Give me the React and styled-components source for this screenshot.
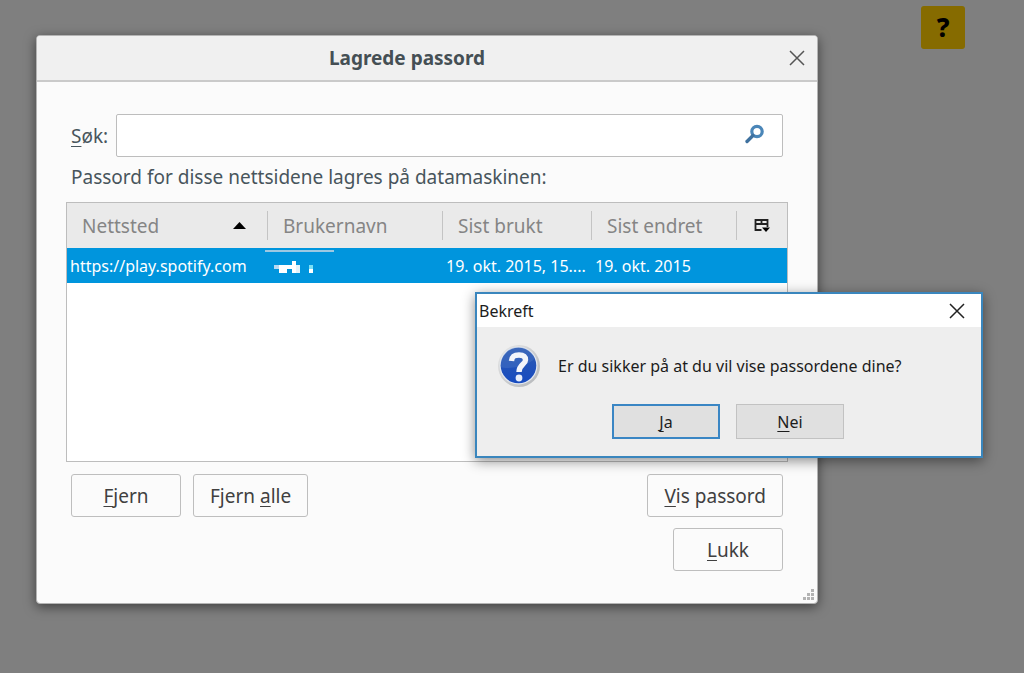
import { useState } from "react";
import styled, { createGlobalStyle } from "styled-components";

const GlobalStyle = createGlobalStyle`
  * {
    box-sizing: border-box;
  }

  body {
    margin: 0;
    background: #7f7f7f;
    font-family: "Noto Sans", "Open Sans", sans-serif;
  }

  button,
  input {
    font-family: inherit;
  }
`;

const Desktop = styled.main`
  display: flex;
  justify-content: space-between;
  align-items: flex-start;
  min-height: 100vh;
  padding: 6px 59px 36px 36px;
`;

const HelpButton = styled.button`
  width: 44px;
  height: 43px;
  padding: 0;
  border: 0;
  border-radius: 3px;
  background: #866b00;
  color: #000;
  font-size: 26px;
  line-height: 43px;
  font-weight: 800;
`;

const Window = styled.section`
  position: relative;
  flex: 0 1 782px;
  margin-top: 29px;
  border: 1px solid #b4b4b4;
  border-radius: 4px;
  background: #fbfbfb;
  color: #48555c;
  box-shadow: 0 3px 12px rgba(0, 0, 0, 0.5);
`;

const TitleBar = styled.header`
  display: grid;
  grid-template-columns: 1fr 40px;
  align-items: center;
  height: 46px;
  border-bottom: 2px solid #cacaca;
  border-radius: 3px 3px 0 0;
  background: #f0f0f0;

  h1 {
    margin: 0;
    font-size: 19px;
    line-height: 26px;
    font-weight: 700;
    text-align: center;
    color: #454f54;
  }
`;

const CloseButton = styled.button`
  display: flex;
  align-items: center;
  justify-content: center;
  width: 40px;
  height: 32px;
  padding: 0;
  border: 0;
  background: transparent;
  color: ${(props) => props.$color};
`;

const Content = styled.div`
  padding: 32px 29px;
`;

const SearchRow = styled.div`
  display: flex;
  align-items: center;
  gap: 8px;
  margin: 0 5px;

  label {
    font-size: 19px;
    line-height: 28px;
  }
`;

const SearchBox = styled.div`
  display: flex;
  flex: 1;
  align-items: center;
  height: 43px;
  padding-right: 17px;
  border: 1px solid #bdbdbd;
  border-radius: 2px;
  background: #fff;

  input {
    flex: 1;
    min-width: 0;
    height: 100%;
    padding: 0 10px;
    border: 0;
    outline: 0;
    background: transparent;
    font-size: 19px;
  }
`;

const Intro = styled.p`
  margin: 6px 5px 11px;
  font-size: 19px;
  line-height: 28px;
`;

const ListBox = styled.div`
  height: 260px;
  border: 1px solid #bdbdbd;
  background: #fff;
`;

const Table = styled.table`
  width: 100%;
  table-layout: fixed;
  border-collapse: collapse;

  th,
  td {
    padding: 0;
    text-align: left;
    white-space: nowrap;
  }

  thead tr {
    height: 45px;
    background: #eaeaea;
  }

  th {
    font-size: 19px;
    line-height: 28px;
    font-weight: 400;
    color: #858585;
  }

  tbody tr {
    height: 35px;
    background: #0095dd;
  }

  td {
    padding-left: 3px;
    font-size: 16px;
    line-height: 24px;
    color: #fff;
  }
`;

const Col = styled.col`
  width: ${(props) => props.$width};
`;

const HeadCell = styled.div`
  display: flex;
  align-items: center;
  justify-content: space-between;
  height: 29px;
  padding: 0 21px 0 15px;
  border-right: 1px solid #c4c4c4;
`;

const PickerButton = styled.button`
  display: flex;
  align-items: center;
  justify-content: center;
  width: 100%;
  height: 29px;
  padding: 0;
  border: 0;
  background: transparent;
`;

const Blurred = styled.svg`
  display: block;
  margin-left: -6px;
`;

const Actions = styled.div`
  display: flex;
  gap: 12px;
  margin: ${(props) => props.$top} 5px 0;
`;

const Button = styled.button`
  min-width: 110px;
  height: 43px;
  margin-left: ${(props) => (props.$push ? "auto" : "0")};
  padding: 0 16px;
  border: 1px solid #bebebe;
  border-radius: 3px;
  background: #fbfbfb;
  color: #404040;
  font-size: 19px;
  line-height: 28px;
`;

const Grip = styled.svg`
  position: absolute;
  right: 2px;
  bottom: 2px;
`;

const Confirm = styled.section`
  position: absolute;
  top: 256px;
  left: 438px;
  width: 508px;
  border: 2px solid #3a86bd;
  background: #eee;
  color: #1c1c1c;
  box-shadow: 0 3px 12px rgba(0, 0, 0, 0.45);
`;

const ConfirmTitle = styled.header`
  display: flex;
  align-items: center;
  justify-content: space-between;
  height: 33px;
  padding: 0 4px 0 2px;
  background: #fff;

  h2 {
    margin: 0;
    font-size: 16px;
    line-height: 24px;
    font-weight: 400;
  }
`;

const Message = styled.div`
  display: flex;
  align-items: center;
  gap: 17px;
  padding: 17px 20px 0;

  p {
    margin: 0;
    font-size: 16px;
    line-height: 24px;
  }
`;

const Choices = styled.div`
  display: flex;
  justify-content: center;
  gap: 16px;
  padding: 16px 2px 17px 0;
`;

const Choice = styled.button`
  width: 108px;
  height: 35px;
  padding: 0;
  border: ${(props) => (props.$primary ? "2px solid #3a86c4" : "1px solid #c2c2c2")};
  background: #e0e0e0;
  color: #1c1c1c;
  font-size: 16px;
  line-height: 24px;
`;

const Key = styled.span`
  text-decoration: underline;
  text-decoration-thickness: 1px;
  text-underline-offset: 3px;
  text-decoration-skip-ink: none;
`;

const logins = [
  {
    site: "https://play.spotify.com",
    lastUsed: "19. okt. 2015, 15....",
    changed: "19. okt. 2015",
  },
];

function CloseIcon() {
  return (
    <svg width="16" height="16" viewBox="0 0 16 16" fill="none" aria-hidden="true">
      <path d="M1 1l14 14M15 1L1 15" stroke="currentColor" strokeWidth="1.5" />
    </svg>
  );
}

function SearchIcon() {
  return (
    <svg width="21" height="24" viewBox="0 0 21 24" fill="none" aria-hidden="true">
      <circle cx="13" cy="7.5" r="5.2" stroke="#4a86b8" strokeWidth="3.2" />
      <path d="M9 11.5L3 17.5" stroke="#3f719f" strokeWidth="3.4" strokeLinecap="round" />
    </svg>
  );
}

function SortIcon() {
  return (
    <svg width="13" height="7" viewBox="0 0 13 7" aria-hidden="true">
      <path d="M6.5 0L13 7H0z" fill="#000" />
    </svg>
  );
}

function PickerIcon() {
  return (
    <svg width="16" height="15" viewBox="0 0 16 15" aria-hidden="true">
      <path
        d="M7.5 12H1.5V2H13.5V9M1.5 6H13.5M7.5 2V6"
        fill="none"
        stroke="#222"
        strokeWidth="1.8"
      />
      <path d="M8 9.500h8l-4 4.500z" fill="#000" />
    </svg>
  );
}

// the user name is blotted out, only a few pixels of it remain
function HiddenName() {
  return (
    <Blurred width="69" height="33" viewBox="0 0 69 33" role="img" aria-label="Skjult">
      <path d="M0 2h69" stroke="#9cc8e2" strokeWidth="2" />
      <path d="M9 16h5v4H9z" fill="#b9d9f2" />
      <path d="M14 16h8v8h-8z" fill="#fff" />
      <path d="M22 16h5v4h-5zM27 12h4v4h4v8h-8z" fill="#fff" />
      <path d="M31 16h4v8h-4z" fill="#e3f3fb" />
      <path d="M44 16h4v4h-4z" fill="#7be0f5" />
      <path d="M44 20h4v4h-4z" fill="#fff" />
    </Blurred>
  );
}

function QuestionIcon() {
  return (
    <svg width="44" height="44" viewBox="0 0 44 44" aria-hidden="true">
      <defs>
        <linearGradient id="rim" x1="0" y1="0" x2="1" y2="1">
          <stop offset="0" stopColor="#e8e8e8" />
          <stop offset="1" stopColor="#b2b5b8" />
        </linearGradient>
        <linearGradient id="ball" x1="0" y1="0" x2="0" y2="1">
          <stop offset="0" stopColor="#2d5bb2" />
          <stop offset="1" stopColor="#174bc0" />
        </linearGradient>
      </defs>
      <circle cx="22" cy="22" r="21" fill="url(#rim)" />
      <circle cx="21.500" cy="21.500" r="19" fill="#e4e9f1" />
      <circle cx="21.500" cy="21.500" r="17.800" fill="url(#ball)" />
      <path d="M3.700 23C11 26 31 22 38 14.500A17.800 17.800 0 0 0 3.700 23z" fill="#5d83ca" opacity="0.300" />
      <path
        d="M14.500 17C15 12 18 11 22 11C26 11 28.500 12.500 28.500 16C28.500 20.500 22 20.500 22 28"
        fill="none"
        stroke="#f3f5fa"
        strokeWidth="5.400"
      />
      <circle cx="22" cy="34" r="3.400" fill="#e8eefa" />
    </svg>
  );
}

function GripIcon() {
  const dots = [
    [10, 1],
    [6, 5],
    [10, 5],
    [2, 9],
    [6, 9],
    [10, 9],
  ];
  return (
    <Grip width="13" height="12" viewBox="0 0 13 12" aria-hidden="true">
      {dots.map(([x, y]) => (
        <rect key={`${x}-${y}`} x={x - 1} y={y - 1} width="3" height="3" fill="#b3b3b3" />
      ))}
    </Grip>
  );
}

function ConfirmDialog() {
  return (
    <Confirm role="dialog" aria-labelledby="confirm-title">
      <ConfirmTitle>
        <h2 id="confirm-title">Bekreft</h2>
        <CloseButton $color="#222" aria-label="Lukk">
          <CloseIcon />
        </CloseButton>
      </ConfirmTitle>
      <Message>
        <QuestionIcon />
        <p>Er du sikker på at du vil vise passordene dine?</p>
      </Message>
      <Choices>
        <Choice $primary>
          <Key>J</Key>a
        </Choice>
        <Choice>
          <Key>N</Key>ei
        </Choice>
      </Choices>
    </Confirm>
  );
}

function App() {
  const [search, setSearch] = useState("");

  return (
    <>
      <GlobalStyle />
      <Desktop>
        <Window aria-labelledby="window-title">
          <TitleBar>
            <h1 id="window-title">Lagrede passord</h1>
            <CloseButton $color="#555" aria-label="Lukk">
              <CloseIcon />
            </CloseButton>
          </TitleBar>
          <Content>
            <SearchRow>
              <label htmlFor="search">
                <Key>S</Key>øk:
              </label>
              <SearchBox>
                <input
                  id="search"
                  type="text"
                  value={search}
                  onChange={(e) => setSearch(e.target.value)}
                />
                <SearchIcon />
              </SearchBox>
            </SearchRow>
            <Intro>Passord for disse nettsidene lagres på datamaskinen:</Intro>
            <ListBox>
              <Table>
                <colgroup>
                  <Col $width="auto" />
                  <Col $width="175px" />
                  <Col $width="149px" />
                  <Col $width="145px" />
                  <Col $width="50px" />
                </colgroup>
                <thead>
                  <tr>
                    <th aria-sort="ascending">
                      <HeadCell>
                        Nettsted
                        <SortIcon />
                      </HeadCell>
                    </th>
                    <th>
                      <HeadCell>Brukernavn</HeadCell>
                    </th>
                    <th>
                      <HeadCell>Sist brukt</HeadCell>
                    </th>
                    <th>
                      <HeadCell>Sist endret</HeadCell>
                    </th>
                    <th>
                      <PickerButton aria-label="Velg kolonner">
                        <PickerIcon />
                      </PickerButton>
                    </th>
                  </tr>
                </thead>
                <tbody>
                  {logins.map((item) => (
                    <tr key={item.site}>
                      <td>{item.site}</td>
                      <td>
                        <HiddenName />
                      </td>
                      <td>{item.lastUsed}</td>
                      <td>{item.changed}</td>
                      <td />
                    </tr>
                  ))}
                </tbody>
              </Table>
            </ListBox>
            <Actions $top="12px">
              <Button>
                <Key>F</Key>jern
              </Button>
              <Button>
                Fjern <Key>a</Key>lle
              </Button>
              <Button $push>
                <Key>V</Key>is passord
              </Button>
            </Actions>
            <Actions $top="11px">
              <Button $push>
                <Key>L</Key>ukk
              </Button>
            </Actions>
          </Content>
          <GripIcon />
          <ConfirmDialog />
        </Window>
        <HelpButton aria-label="Hjelp">?</HelpButton>
      </Desktop>
    </>
  );
}

export default App;
